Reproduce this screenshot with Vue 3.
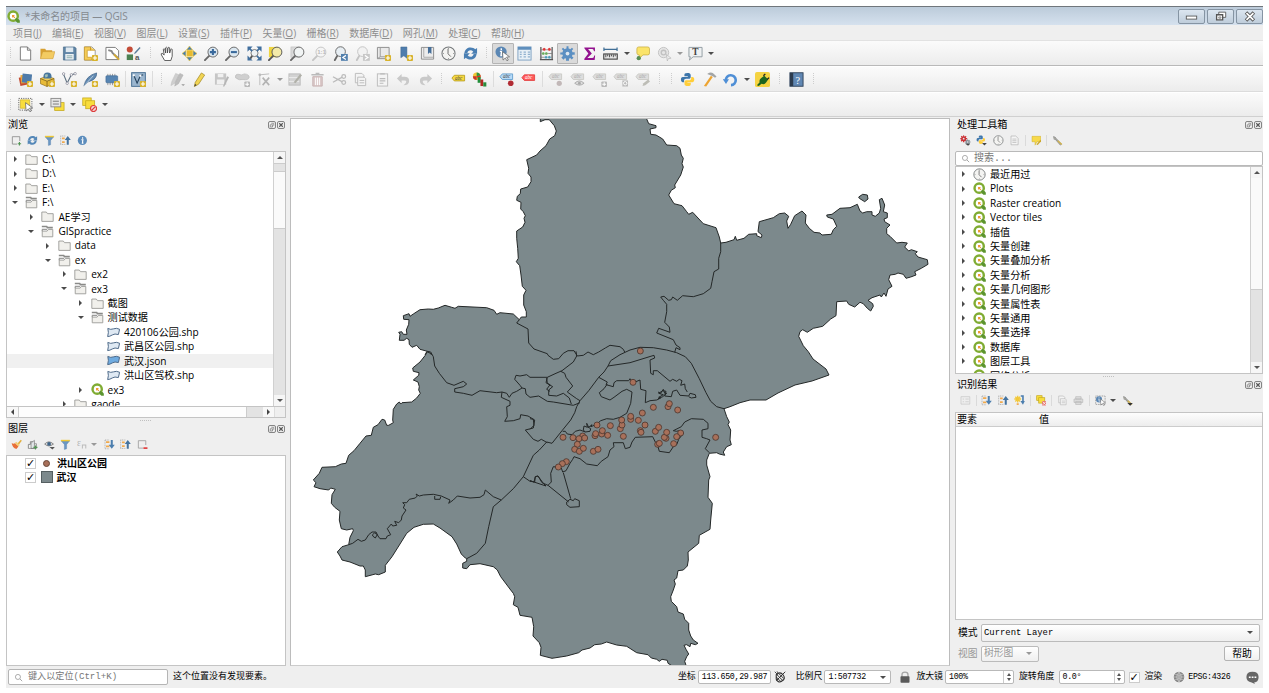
<script setup>
/* ---------- icon artwork, 16 x 16 grid ---------- */
const plus = '<rect x="9.500" y="9.500" width="6.500" height="6.500" rx="1" fill="#d8b32c"/><path d="M12.750 10.500v4.500M10.500 12.750h4.500" stroke="#fff" stroke-width="1.200"/>'
const gplus = '<rect x="10" y="10" width="6" height="6" rx="1" fill="#b9b9b9"/><path d="M13 11v4M11 13h4" stroke="#fff" stroke-width="1.1"/>'
const lens = (f, s, extra = '') => `<path d="M5.500 10.500L1 15" stroke="${s}" stroke-width="2" stroke-linecap="round"/><circle cx="9.500" cy="6.500" r="5.300" fill="${f}" stroke="${s}" stroke-width="1"/>${extra}`
const glass = (f, s, extra = '') => `<path d="M4.500 10.500L2 15" stroke="${s}" stroke-width="2" stroke-linecap="round"/><circle cx="8" cy="6" r="5.200" fill="${f}" stroke="${s}"/>${extra}`
const tag = (f, s, x = 0, y = 0, t = '#444') => `<g transform="translate(${x} ${y})"><path d="M1 6.500L3.500 3.500H14.500V9.500H3.500Z" fill="${f}" stroke="${s}" stroke-width=".9"/><text x="4.200" y="8.400" font-size="5.400" font-style="italic" font-family="Liberation Serif" fill="${t}">abc</text></g>`
const pyth = '<path d="M8 1c-3 0-3.300 1-3.300 2.200v1.300h3.600v.7H3C1.500 5.200 1 6.500 1 8s.6 2.800 2 2.800h1.300V9.200c0-1.200 1-2 2.100-2h3.300c1 0 1.700-.8 1.700-1.700V3.200C11.400 1.700 10 1 8 1z" fill="#3d76ab"/><path d="M8.200 15c3 0 3.300-1 3.300-2.200v-1.300H7.900v-.7h5.300c1.500 0 2-1.300 2-2.800s-.6-2.800-2-2.800h-1.300v1.600c0 1.200-1 2-2.100 2H6.500c-1 0-1.700.8-1.700 1.700v2.300C4.800 14.300 6.200 15 8.200 15z" fill="#ffce3a"/>'
const arrowDown = '<path d="M1.500 1.500v13M1.500 1.500h6M1.500 14.500h6" stroke="#9a9a9a" stroke-dasharray="1.500 1"/><path d="M3 4.500h5M3 11h5" stroke="#f0a94c" stroke-width="2.600"/><path d="M10 1.500v7H7l4.500 6 4.500-6h-3v-7z" fill="#4c7eae"/>'
const arrowUp = '<path d="M.5 1.500h8M.5 14h8M1 2v12" stroke="#9a9a9a" stroke-dasharray="1.500 1"/><path d="M3 5h4M3 10.500h4" stroke="#f0a94c" stroke-width="2.600"/><path d="M10 14.500v-7H7l4.500-6 4.500 6h-3v7z" fill="#44739f"/>'
const filter = '<path d="M1.500 2.500h13L9.800 8v6.500l-3.300 1V8z" fill="#6a97c4" stroke="#5580aa" stroke-width=".6"/><path d="M1.500 2.300h13" stroke="#f0c835" stroke-width="2.200"/>'
const refresh = (c) => `<path d="M1.500 7.500C2 3.500 4.800 1.500 8 1.500c2.300 0 3.900.8 5 2L15 2v6.300H8.700L11 6C10 5 9 4.500 8 4.500 6.300 4.500 5 5.500 4.700 7.500z" fill="${c}"/><path d="M14.500 8.500c-.5 4-3.300 6-6.500 6-2.300 0-3.900-.8-5-2L1 14V7.700h6.300L5 10c1 1 2 1.500 3 1.500 1.700 0 3-1 3.300-3z" fill="${c}"/>`
const clock = '<circle cx="8" cy="8" r="7" fill="#f4f4f2" stroke="#75797b" stroke-width="1.100"/><path d="M7.500 3v5.300l3 3" stroke="#666" fill="none"/><path d="M8 2v1M14 8h-1M2 8h1M8 14v-1" stroke="#888"/>'
const info = '<circle cx="8" cy="8" r="6.800" fill="#5b8cbc"/><path d="M8.300 3.500v2M6.500 7H8.700L8 12H9.500" stroke="#fff" stroke-width="1.700" fill="none"/>'
const cursor = '<path d="M8 6l7.500 5.500-3.200.4 1.900 3-1.500.9-1.700-3.100L8.600 15z" fill="#fff" stroke="#666" stroke-width=".8"/>'
const note = '<path d="M2 3q0-2 2-2h9.500q2 0 2 2v4.500q0 2-2 2H8.500L4.500 13.500V9.500Q2 9.500 2 7.500z" fill="#fbe46a" stroke="#c8ae43" stroke-width=".8"/>'
const wrench = '<path d="M1.500 2.500l3 .5 1.500 2 8 8.500-1.700 1.500L5 6.500 2.500 6" fill="#b0b0a8" stroke="#777" stroke-width=".9"/><path d="M8.500 8.500l6 5.500" stroke="#d4b44a" stroke-width="2"/>'
const page = (s) => `<path d="M2.500 1h7.500l3.500 3.500v10.500h-11zM10 1v3.500h3.500" fill="#fff" stroke="${s}"/>`
const qlogo = '<path d="M9 9.500h3.500l3.300 3.500v2.800h-3L9 12z" fill="#5c9430"/><circle cx="7.600" cy="7.600" r="5.700" fill="#fff" stroke="#80ac33" stroke-width="3"/><path d="M10.500 10.500l3 3" stroke="#5c9430" stroke-width="3"/><path d="M6.200 6.200h3.400l-1 1.400 1.600 1.600-1 1-1.600-1.600-1.400 1z" fill="#ef9832"/>'
const globe = '<circle cx="8" cy="8" r="7" fill="#858585"/><path d="M1.500 8h13M8 1.500v13M3 4.500q5 2.500 10 0M3 11.500q5-2.500 10 0M8 1.500q-6 6.500 0 13M8 1.500q6 6.500 0 13" stroke="#e5e5e5" stroke-width=".7" fill="none"/>'
const abacus = '<path d="M2 1v14M14 1v14M1 14.500h14" stroke="#555" stroke-width="1.300"/><path d="M2 4h12M2 8h12M2 12h12" stroke="#777" stroke-width=".8"/><g stroke="#fff" stroke-width=".3"><circle cx="5.500" cy="3.500" r="1.700" fill="#d33"/><circle cx="11" cy="3.500" r="1.700" fill="#d33"/><circle cx="4.500" cy="8" r="1.700" fill="#6aac5d"/><circle cx="7.800" cy="8" r="1.700" fill="#6aac5d"/><circle cx="7.500" cy="12" r="1.600" fill="#4b9bb8"/><circle cx="11" cy="12" r="1.600" fill="#4b9bb8"/></g>'
const gear = (c) => `<g fill="${c}"><path d="M7 .3h2l.6 15.400H6.400zM.3 7l15.400-.4v2.800L.3 9z"/><path d="M7 .3h2l.6 15.400H6.400zM.3 7l15.400-.4v2.800L.3 9z" transform="rotate(45 8 8)"/><circle cx="8" cy="8" r="5.500"/></g><circle cx="8" cy="8" r="2" fill="#dfe7ef"/>`

const icons = {
  new: page('#777'),
  open: '<path d="M.5 13.500V3h5l1 1.500H13V7" fill="#d7a032"/><path d="M.5 13.500L2.800 6H15.800l-2 7.500z" fill="#f3cb62" stroke="#cf9c34" stroke-width=".6"/>',
  save: '<path d="M1.500 1h12l1.500 1.500V15H1.500z" fill="#5f84a5" stroke="#466a8a" stroke-width=".7"/><rect x="4" y="1.500" width="8" height="5" fill="#dfe8ef"/><rect x="3.500" y="8.500" width="9" height="6" fill="#edf1f4"/><path d="M5 10.500h6M5 12.500h6" stroke="#8aa"/>',
  layout: '<path d="M1.500 1h8l3.500 3.500V15H1.500z" fill="#fff" stroke="#999"/><path d="M1.500 1v14H9v-3H4.500V4.500H8V1zM8 1v3.500h5" fill="#f5cc58" stroke="#c89928" stroke-width=".8"/>' + plus,
  manager: '<path d="M1 1.500h10L14.500 5v9.500H1z" fill="#fff" stroke="#777"/><path d="M3.500 4.500l3.500 1 1 2 5.500 5" stroke="#888" stroke-width="2" fill="none"/><path d="M9.500 9l5.500 5.500" stroke="#d4aa34" stroke-width="2"/>',
  style: '<circle cx="4" cy="3.800" r="3.200" fill="#c34c37"/><rect x=".8" y="9" width="6.700" height="6" fill="#4c8152"/><path d="M14.500 1L9.500 6.500l-1 2 2-.8L15.500 2z" fill="#5b7c99"/><text x="9.500" y="15" font-size="8.500" font-weight="700" font-family="Liberation Sans" fill="#555">a</text>',
  hand: '<path d="M5 15.500L1.500 9.500q-.6-1.700.8-1.700L4.500 9.500 3.500 3.500q.8-1.300 1.600 0l1 4-.2-5.500q.9-1.500 1.700 0l.4 5.300.6-5.500q1-1.200 1.700.2L10.300 7.500l1.200-4q1.200-1 1.500.4L13 11l-1.500 4.500z" fill="#fff" stroke="#444" stroke-width=".9"/>',
  panmap: '<rect x="5" y="4.500" width="6.500" height="6.500" fill="#e7bb2e"/><g fill="#4b7fb0" stroke="#f2c93b" stroke-width=".7"><path d="M8 0l3.300 4.200H4.700z"/><path d="M8 16l3.300-4.200H4.700z"/><path d="M0 8l4.200-3.300v6.600z"/><path d="M16 8l-4.200-3.300v6.600z"/></g>',
  zoomin: lens('#dbe7f0', '#666', '<path d="M9.500 3.300v6.400M6.300 6.500h6.400" stroke="#39699c" stroke-width="2.200"/>'),
  zoomout: lens('#dbe7f0', '#666', '<path d="M6.300 6.500h6.400" stroke="#39699c" stroke-width="2.200"/>'),
  zoomfull: '<circle cx="8" cy="7.500" r="3.800" fill="#eef2f5" stroke="#777"/><path d="M5.500 10.500L3 14.500" stroke="#555" stroke-width="2"/><g fill="#416f9e"><path d="M.5.500h5.500L.5 6z"/><path d="M15.500.500H10L15.500 6z"/><path d="M.5 15.500H6L.5 10z"/><path d="M15.500 15.500H10L15.500 10z"/></g><path d="M2 2l3.500 3.500M14 2l-3.500 3.500M14 14l-3.500-3.500" stroke="#416f9e" stroke-width="1.800"/>',
  zoomsel: '<rect x="1" y="1" width="9" height="11" fill="#efd540"/>' + lens('#f3eaa9', '#555'),
  zoomlay: '<rect x="1" y="1" width="9" height="11" fill="#d9d9d9" stroke="#bbb" stroke-width=".6"/>' + lens('#f1f4f4', '#666'),
  zoomnat: lens('#f5f5f5', '#c4c4c4', '<text x="5.500" y="9" font-size="6.500" font-weight="700" font-family="Liberation Sans" fill="#bbb">1:1</text>'),
  zoomlast: glass('#e7eef3', '#666', '<rect x="8.500" y="8.500" width="7.300" height="7.300" fill="#507fad"/><path d="M13.800 10L10.500 12.200l3.300 2.200" stroke="#fff" stroke-width="1.300" fill="none"/>'),
  zoomnext: glass('#f2f2f2', '#c3c3c3', '<rect x="8.500" y="8.500" width="7.300" height="7.300" fill="#c7c7c7"/><path d="M10.500 10l3.300 2.200-3.300 2.200" stroke="#fff" stroke-width="1.300" fill="none"/>'),
  newmap: '<path d="M1.500 1.500h12.500v12H1.500z" fill="#e9e9e9" stroke="#8c8c8c"/><path d="M4.500 2v9.500M4.500 11.500H12M1.500 13.500l3-2" stroke="#999" fill="none"/>' + plus,
  new3d: '<path d="M3 1h6.500v12L6.200 10.500 3 12.500z" fill="#4e7dad" stroke="#3d658c" stroke-width=".5"/>' + plus,
  bookmarks: '<path d="M1.500 1.500H14.500v12.500H1.500z" fill="#ececec" stroke="#8c8c8c"/><path d="M4 2v10M4 12h10" stroke="#aaa"/><path d="M8.500 1h3.700v7.500L10.300 6.800 8.500 8.500z" fill="#466f99"/>',
  clock, refresh: refresh('#4a7fb3'), refreshs: refresh('#5588b8'),
  identify: '<circle cx="6.500" cy="6.500" r="6" fill="#5b87b4"/><path d="M6.700 2.500v1.800M5.200 5.700h1.800l-.6 4.500h1.300" stroke="#fff" stroke-width="1.500" fill="none"/>' + cursor,
  table: '<rect x="1" y="1" width="14" height="14" fill="#e8f0f6" stroke="#7da0c2"/><path d="M1 2.500h14" stroke="#5f8fbd" stroke-width="3"/><path d="M3 6.500h2M3 9h2M3 11.500h2M7 6.500h2.500M7 9h2.500M7 11.500h2.500M11.500 6.500H14M11.500 9H14M11.500 11.500H14" stroke="#8fb0ce" stroke-width="1.300"/>',
  abacus, gear: gear('#5b8fc2'),
  sigma: '<path d="M2.500 1.500h11.300V5.500h-1Q12.300 3.300 11 3.300H6.500L10.500 8l-4.800 4.700H11q1.800 0 2-2.700h1l-.5 5H2.500v-1.500L6.800 8 2.500 2.500z" fill="#93128f"/>',
  ruler: '<path d="M.8 3.500h14.500M1 1.700v3.500M15 1.700v3.500" stroke="#3f6e96" stroke-width="1.300"/><rect x=".8" y="8.500" width="14.400" height="5.500" fill="#e8e8e8" stroke="#444" stroke-width="1.200"/><path d="M3 9v3M5 9v2M7 9v3M9 9v2M11 9v3M13 9v2" stroke="#333" stroke-width=".9"/>',
  tip: note + '<circle cx="4" cy="13" r="2.300" fill="#588d54"/>',
  run: '<circle cx="7" cy="7" r="5.500" fill="#e5e5e5" stroke="#c1c1c1"/><circle cx="7" cy="7" r="2.500" fill="none" stroke="#c1c1c1" stroke-width="1.400"/><path d="M10 9l5 4-3 .5L11 16z" fill="#eee" stroke="#bbb" stroke-width=".8"/>',
  text: '<path d="M1 1.500h14v10H5.500L1.500 15l1-3.500H1z" fill="#eff1f2" stroke="#909ba1"/><text x="4.500" y="10" font-size="10" font-weight="700" font-family="Liberation Serif" fill="#444">T</text>',
  dsm: '<rect x="1.500" y="5" width="9" height="9" fill="#c34b31" transform="rotate(-12 6 9)"/><rect x="3" y="3" width="9" height="9" fill="#e9a73a" transform="rotate(-6 7 8)"/><path d="M5 1.500l10 1.200-1 9.500L4 11z" fill="#4e7ba9"/>' + plus,
  gpkg: '<path d="M.5 7l7-2.500L15 7v5l-7.500 3.500-7-3z" fill="#e7ba37" stroke="#8c6b17" stroke-width=".7"/><circle cx="8" cy="4.800" r="4.300" fill="#46759e"/><path d="M5 3l3-1 .5 2.500L6 6z" fill="#a3c1b7"/><path d="M.5 7l7 2.800L15 7M7.500 9.800v5.700" stroke="#765b16" stroke-width=".8" fill="#f2cf5c"/>' + plus,
  shp: '<path d="M1.500 2L5.500 12 10 3 14 1.800" stroke="#5e7180" stroke-width="1.200" fill="none"/><g fill="#fff" stroke="#778" stroke-width=".7"><circle cx="1.700" cy="2" r="1.300"/><circle cx="10" cy="3" r="1.300"/><circle cx="14" cy="1.800" r="1.300"/><circle cx="5.500" cy="12" r="1.300"/></g>' + plus,
  spatial: '<path d="M1 15Q3 4 14.500 1 15 8 5.500 10.500z" fill="#618ab2" stroke="#3e6288" stroke-width=".8"/><path d="M1 15L11 4" stroke="#e4edf3" stroke-width=".7"/>' + plus,
  memory: '<path d="M3 2v12M5.500 2v12M8 2v12M10.500 2v12" stroke="#999" stroke-width="1"/><rect x="1" y="4" width="12.500" height="7.500" rx="1" fill="#5684b2" stroke="#426b96" stroke-width=".7"/>' + plus,
  virtual: '<rect x=".7" y=".7" width="14.600" height="14.600" fill="#9bb6cf" stroke="#456d91"/><path d="M3 3.500l3.500 8.500L10 4 13 3" stroke="#23405a" stroke-width="1.100" fill="none"/><circle cx="3" cy="3.500" r="1.200" fill="#fff"/><circle cx="10" cy="4" r="1.200" fill="#fff"/>' + plus,
  edits: '<path d="M1 14.500L2 10 6 1.500l3.500 1.500L5 12z" fill="#cfcfcf" stroke="#bbb" stroke-width=".5"/><path d="M5 15l1-4.500L10.500 1.500l3.500 1.700L9 12.500z" fill="#bdbdbd" stroke="#aaa" stroke-width=".5"/><path d="M12 13h4l-2 2z" fill="#999"/>',
  pencil: '<path d="M2.500 15.500L3.500 11 10 1l3.500 2.200L7 13z" fill="#f2d553" stroke="#a58c2c" stroke-width=".8"/><path d="M2.500 15.500l.7-2.700 1.600 1.100z" fill="#333"/>',
  saveed: '<path d="M1 1.500h12v12H1z" fill="#c6c6c6"/><path d="M4 2h6v3.500H4zM3 8h8v5H3z" fill="#f0f0f0"/><path d="M9.500 15.500l4.500-11 2 1-5 10z" fill="#b5b5b5"/>',
  addpoly: '<path d="M.5 6Q0 2 4 2.500q3 1.500 6-.5 5.500 .5 5 4-1 3-6.500 2-4 1.500-8-2z" fill="#cfcfcf" stroke="#b8b8b8" stroke-width=".7"/>' + gplus,
  vertex: '<path d="M3 2v12M3 3l10-1" stroke="#bbb"/><path d="M6 6l7 8M13 6l-7 8" stroke="#b3b3b3" stroke-width="1.700"/><circle cx="3" cy="3" r="1.500" fill="#bbb"/>',
  modify: '<rect x="1" y="2" width="12" height="12" fill="#d2d2d2" stroke="#bdbdbd"/><path d="M1 6h11M1 10h11" stroke="#eee"/><path d="M6 11L13 2l2 1.500L8 12z" fill="#b0b0a8"/>',
  trash: '<path d="M1.500 3h13M6 1.500h4" stroke="#bbb" stroke-width="1.500"/><path d="M3 5h10v10H3z" fill="#dbcaca" stroke="#c6b0b0"/><path d="M6 6v8M8 6v8M10 6v8" stroke="#fff"/>',
  cut: '<path d="M1 5l10 5.500M1 11l10-5.500" stroke="#bbb" stroke-width="1.300"/><circle cx="12.500" cy="4.800" r="2" fill="none" stroke="#bbb" stroke-width="1.300"/><circle cx="12.500" cy="11.200" r="2" fill="none" stroke="#bbb" stroke-width="1.300"/>',
  copy: '<path d="M2.500 1.500h7l2 2v8h-9z" fill="#f4f4f4" stroke="#bbb"/><path d="M5 5.500h7l1.500 1.500v7.500H5zM7 9h5M7 11.500h5" fill="#f4f4f4" stroke="#bbb"/>',
  paste: '<rect x="2.500" y="2" width="11" height="13" fill="#f4f4f4" stroke="#bbb"/><path d="M5.500 2h5M5 7h6M5 9.500h6M5 12h4" stroke="#bbb" stroke-width="1.300"/>',
  undo: '<path d="M6 2v3h3q5 0 5 4.500T8 14q3-2 3-3.500T9 9H6v3L1 7z" fill="#c9c9c9"/>',
  redo: '<path d="M10 2v3H7Q2 5 2 9.500T8 14q-3-2-3-3.500T7 9h3v3l5-5z" fill="#c9c9c9"/>',
  abc: tag('#f6d841', '#b79c1f', 0, 0),
  diagram: '<circle cx="5" cy="4.500" r="4" fill="#f2c536"/><path d="M5 4.500L9 3a4 4 0 0 1-2 5z" fill="#d33425"/><path d="M5 4.500V.5a4 4 0 0 1 3.800 3z" fill="#2c9444"/><path d="M5 4.500v4a4 4 0 0 1-4-4z" fill="#c8352b"/><rect x="6" y="5.500" width="3.300" height="6" fill="#1f8d39"/><rect x="9" y="8" width="3" height="7" fill="#b02a22"/><rect x="12" y="11" width="3.300" height="4.500" fill="#288b3b"/>',
  pinabc: tag('#b6d9f6', '#5e9acb', 0, -1.500) + '<circle cx="12.500" cy="12" r="3" fill="#b12b33"/>',
  redabc: tag('#ff5959', '#e23f3f', 0, -.5, '#fff'),
  g1: tag('#ddd', '#c7c7c2', 0, -1.500, '#aaa') + '<circle cx="12" cy="12" r="2.800" fill="#c2b8b8"/>',
  g2: tag('#ddd', '#c7c7c2', 0, -1.500, '#aaa') + '<path d="M5 12q5-5 10 0-5 4-10 0z" fill="#ddd" stroke="#aaa"/><circle cx="10" cy="12" r="1.500" fill="#aaa"/>',
  g3: tag('#ddd', '#c7c7c2', 0, -1.500, '#aaa') + gplus,
  g4: tag('#ddd', '#c7c7c2', 0, -1.500, '#aaa') + '<rect x="10" y="9" width="6" height="6.500" fill="#bbb"/><circle cx="13" cy="12" r="1.800" fill="none" stroke="#fff"/>',
  g5: tag('#ddd', '#c7c7c2', 0, -1.500, '#aaa') + '<path d="M8 15l1-3 5-4 2 2-5 4z" fill="#bdbdb6"/>',
  python: pyth,
  hammer: '<path d="M2 15L9.500 4l2 1.200L4.500 15.500z" fill="#eda431"/><path d="M5.500 2q5-3 7.500.5l2.500 2.200-1.600 1.300L11.500 4.500 9 3.500z" fill="#a3a5a6"/>',
  undo2: '<path d="M3 9A5.300 5.300 0 1 1 8.500 14" fill="none" stroke="#4f8fd6" stroke-width="2.800"/><path d="M-.2 7.700h6.600L3.200 12.800z" fill="#4f8fd6"/>',
  plugin: '<rect x="0" y="0" width="16" height="16" rx="2" fill="#f5d342"/><path d="M2 14l3-3q-1-3 2-5l3-2 4 4-2 3q-2 3-5 1.500L4 15z" fill="#1d651f"/><path d="M9 4l2-2M13 8l2-2" stroke="#222" stroke-width="1.500"/>',
  help: '<rect x="1" y=".8" width="14" height="14.400" fill="#6087b3" stroke="#31445a"/><rect x="1" y="1" width="3.500" height="14" fill="#2c3b4e"/><text x="6.800" y="12.300" font-size="11" font-family="Liberation Serif" fill="#fff">?</text>',
  select: '<rect x=".8" y="1.500" width="14" height="12.500" fill="none" stroke="#555" stroke-width=".9" stroke-dasharray="1.200 1.200"/><path d="M2.500 3h10v9h-10z" fill="#f8dd3d" stroke="#c9ad22" stroke-width=".7"/>' + cursor,
  selform: '<rect x="5" y="6" width="10" height="8.500" fill="#f8dd3d" stroke="#c3a81e" stroke-width=".8"/><rect x="1" y="1.500" width="10.500" height="9" fill="#e7e7e7" stroke="#8b8b8b"/><path d="M3 4.500h6.500M3 7.500h6.500" stroke="#777"/>',
  desel: '<rect x=".8" y="1" width="9" height="8" fill="#f8dd3d" stroke="#c3a81e" stroke-width=".8"/><rect x="4" y="4" width="9.500" height="8.500" fill="#f8dd3d" stroke="#c3a81e" stroke-width=".8"/><circle cx="12.300" cy="12.300" r="3.200" fill="#f6dada" stroke="#dc3b3b" stroke-width="1.200"/><path d="M10.500 14l3.500-3.500" stroke="#dc3b3b" stroke-width="1.400"/>',
  addlayer: '<path d="M13 9V2.500H2v11h7" fill="none" stroke="#888" stroke-width="1.200"/><path d="M12.500 10.500v5M10 13h5" stroke="#529555" stroke-width="1.700"/>',
  filter, arrowUp, arrowDown, info,
  brush: '<path d="M14.500 1L8 8.500l2 2L16 2.500z" fill="#e1ad39"/><path d="M1 6q3 2 5 0l5 5-3 4Q2 13 1 6z" fill="#e86f39"/><path d="M5.500 6L8 4l5 5-2 2z" fill="#f3cf7a"/>',
  group: '<path d="M2 14V8h3V4h4v4" fill="none" stroke="#777" stroke-width="1.200"/><path d="M6 14V6l5-4v12z" fill="#e2e6e8" stroke="#777"/><path d="M2 14h12V7h-3" fill="none" stroke="#777"/><path d="M12.500 9.500v6M9.500 12.500h6" stroke="#529555" stroke-width="1.700"/>',
  eye: '<path d="M1 7.500Q7 1 14 7.500 7 13 1 7.500z" fill="#ddd" stroke="#666" stroke-width="1.100"/><circle cx="7.500" cy="7.300" r="2.800" fill="#3f6488"/><path d="M8 12h8l-3.500 3.500z" fill="#555"/>',
  expr: '<text x="0" y="11" font-size="14" font-family="Liberation Serif" fill="#b5b5b5">ε</text><path d="M8 14V9h5v5" fill="none" stroke="#bbb" stroke-width="1.500"/>',
  remove: '<path d="M13 9V2.500H2v11h7" fill="none" stroke="#999" stroke-width="1.200"/><path d="M9.500 13.500h6" stroke="#e03c3c" stroke-width="2.500"/>',
  gears: '<g transform="scale(.68)">' + gear('#cb2f33') + '</g><g transform="translate(7 6) scale(.55)">' + gear('#8a9299') + '</g><path d="M8 13h7l-3 3z" fill="#444"/>',
  pymenu: '<g transform="scale(.88)">' + pyth + '</g><path d="M9 12h7l-3.500 3.500z" fill="#444"/>',
  doc: '<path d="M3 1.500h7l3.500 3.500v9.500H3zM5 6h6M5 8.500h6M5 11h6" fill="#f5f5f5" stroke="#b0b0b0"/>',
  inplace: '<path d="M1.500 2h13v8H9l-3 5V10H1.500z" fill="#f7d94a" stroke="#cbab29" stroke-width=".7"/><path d="M8 14l6-7 1.500 1.300L10 15z" fill="#cda82c"/>',
  wrench, qlogo, globe,
  wrenchm: wrench + '<path d="M8 12h8l-4 4z" fill="#333"/>',
  formv: '<path d="M1.500 2.500h13v11h-13zM4 6h2M8 6h5M4 10h2M8 10h5" fill="#eee" stroke="#c4c4c4"/>',
  newres: '<path d="M5.500 1v10M.5 6h10M2 2.500l7 7M9 2.500l-7 7" stroke="#f2c838" stroke-width="2"/><path d="M4 13.500h3" stroke="#f0a94c" stroke-width="2.500"/><path d="M10 1.500h3.300v8" fill="none" stroke="#4c7eae" stroke-width="2.400"/><path d="M9.500 9l3.800 5.500L16 9z" fill="#4c7eae"/>',
  clearsel: '<rect x="1" y="1" width="8" height="7" fill="#f8dd3d" stroke="#c3a81e"/><rect x="4" y="4" width="9" height="8" fill="#f8dd3d" stroke="#c3a81e"/><path d="M9 9h6.500v6.500H9z" fill="#e57772"/><path d="M10 10l4.500 4.500M14.500 10L10 14.500" stroke="#fff" stroke-width="1.100"/>',
  print: '<path d="M4 2.500h8V6H4zM1.500 6h13v5h-13zM4 9.500h8v4.500H4z" fill="#ddd" stroke="#b8b8b8"/>',
  idmode: '<rect x="1" y="1.500" width="14" height="12.500" fill="none" stroke="#666" stroke-dasharray="1.200 1.200"/><circle cx="6" cy="6.500" r="4.500" fill="#5b87b4"/><path d="M6 3.500v1.500M5 6.300h1.300l-.4 3H7" stroke="#fff" fill="none"/>' + cursor,
  folder: '<path d="M1 2.500h5.500l1.500 2h7v9.500H1z" fill="#f1f0ec" stroke="#9a9a97" stroke-width="1.100"/>',
  folderopen: '<path d="M1 1.800h6l1 1.500h6.500" fill="none" stroke="#8a8a88" stroke-width="2"/><path d="M1.500 6v8.500h13V5.500H9L7.500 7.500h-6z" fill="#f1f0ec" stroke="#9a9a97" stroke-width="1.100"/><path d="M1 5.300h6.500" fill="none" stroke="#8a8a88" stroke-width="1.300"/>',
  mouse: '<path d="M3 5q5-5 9 0t-1 8q-5 4-8-2z" fill="#eee" stroke="#333" stroke-width="1.500"/><path d="M4 5l8 8M6 3l7 7M3 8l6 6M15 1L3 13" stroke="#333" stroke-width="1.300"/><path d="M1 1l4 4M4 .5l2 3" stroke="#444" stroke-width="1.300"/>',
  lock: '<path d="M4 8V5q0-3.500 4-3.500T12 5v3" fill="none" stroke="#a5a5a5" stroke-width="1.800"/><rect x="2" y="7" width="12" height="8.500" rx="1" fill="#5a5a5a"/>',
  chat: '<path d="M.5 7.500Q.5 1 8 1t7.500 6.500T10 14l1 2-4-2Q.5 13.500.5 7.500z" fill="#666"/><path d="M3.500 7.700h2.200M7 7.700h2.200M10.500 7.700h2.200" stroke="#fff" stroke-width="1.900"/>',
  search: '<circle cx="7" cy="7" r="4.500" fill="none" stroke="#888" stroke-width="1.200"/><path d="M10.500 10.500l4 4" stroke="#888" stroke-width="1.300"/>',
  float: '<rect x="1" y="1" width="14" height="14" rx="3" fill="none" stroke="#777" stroke-width="1.800"/><path d="M6.500 4.500h5v5M4.500 7.500h4.500v4.500H4.500z" fill="none" stroke="#777" stroke-width="1.400"/>',
  close: '<rect x="1" y="1" width="14" height="14" rx="3" fill="none" stroke="#777" stroke-width="1.800"/><path d="M4.500 4.500l7 7M11.500 4.500l-7 7" stroke="#555" stroke-width="2.200"/>'
}

/* ---------- toolbars: icon name, "|" separator, ":" grip, "v" drop arrow, "x" disabled drop arrow ---------- */
const bars = [
  [[':', 9.2], 'new', 'open', 'save', 'layout', 'manager', 'style', [':', 12.4], 'hand', 'panmap', 'zoomin', 'zoomout', 'zoomfull', 'zoomsel', 'zoomlay', 'zoomnat', 'zoomlast', 'zoomnext', 'newmap', 'new3d', 'bookmarks', 'clock', 'refresh', [':', 11], '!identify', 'table', 'abacus', '!gear', 'sigma', 'ruler', 'v', 'tip', 'run', 'x', 'text', 'v'],
  [[':', 9.2], 'dsm', 'gpkg', 'shp', 'spatial', 'memory', ['|', 5], 'virtual', ['|', 6], [':', 11.4], 'edits', 'pencil', 'saveed', 'addpoly', 'vertex', 'x', 'modify', 'trash', 'cut', 'copy', 'paste', 'undo', 'redo', [':', 11], 'abc', 'diagram', ['|', 5.4], 'pinabc', 'redabc', ['|', 6], 'g1', 'g2', 'g3', 'g4', 'g5', [':', 12], [':', 12], 'python', 'hammer', 'undo2', 'v', 'plugin', [':', 12], 'help', [':', 14]],
  [[':', 9.2], 'select', 'v', 'selform', 'v', 'desel', 'v']
].map(bar => bar.map(e => {
  if (Array.isArray(e)) return { kind: e[0] === ':' ? 'grip' : 'sep', w: e[1] }
  if (e === 'v' || e === 'x') return { kind: 'drop', off: e === 'x' }
  return { kind: 'icon', on: e[0] === '!', svg: icons[e.replace('!', '')] }
}))

const menus = [['项目', 'J'], ['编辑', 'E'], ['视图', 'V'], ['图层', 'L'], ['设置', 'S'], ['插件', 'P'], ['矢量', 'O'], ['栅格', 'R'], ['数据库', 'D'], ['网孔', 'M'], ['处理', 'C'], ['帮助', 'H']]

const tree = [
  [0, '>', 'folder', 'C:\\'], [0, '>', 'folder', 'D:\\'], [0, '>', 'folder', 'E:\\'], [0, 'v', 'folderopen', 'F:\\'],
  [1, '>', 'folder', 'AE学习'], [1, 'v', 'folderopen', 'GISpractice'], [2, '>', 'folder', 'data'], [2, 'v', 'folderopen', 'ex'],
  [3, '>', 'folder', 'ex2'], [3, 'v', 'folderopen', 'ex3'], [4, '>', 'folder', '截图'], [4, 'v', 'folderopen', '测试数据'],
  [5, '', 'poly', '420106公园.shp'], [5, '', 'poly', '武昌区公园.shp'], [5, '', 'polyOn', '武汉.json'], [5, '', 'poly', '洪山区驾校.shp'],
  [4, '>', 'qlogo', 'ex3'], [3, '>', 'folder', 'gaode']
]
const polyShape = f => `<path d="M1 3Q4.500 5 8 3.500T15.500 4L14 10.500Q9.500 9 6.500 11T.8 13Q2.500 8 1 3z" fill="${f}" stroke="#4b6787" stroke-width="1.200"/>`
icons.poly = polyShape('#dfe9f3')
icons.polyOn = polyShape('#6fabe0')

const tools = ['最近用过', 'Plots', 'Raster creation', 'Vector tiles', '插值', '矢量创建', '矢量叠加分析', '矢量分析', '矢量几何图形', '矢量属性表', '矢量通用', '矢量选择', '数据库', '图层工具', '网络分析']

/* ---------- map geometry: survey sheets at 3 units per pixel ---------- */
const sheets = { n: [310, 115], e: [620, 115], w: [300, 340], c: [530, 330], s: [460, 480], z: [0, 0] }
function trace(...parts) {
  let d = ''
  for (let i = 0; i < parts.length; i += 2) {
    const [ox, oy] = sheets[parts[i]]
    const k = parts[i] === 'z' ? 1 : 3
    for (const p of parts[i + 1].trim().split(/\s+/)) {
      const [x, y] = p.split(',').map(Number)
      d += (d ? 'L' : 'M') + (ox + x / k).toFixed(1) + ' ' + (oy + y / k).toFixed(1)
    }
  }
  return d
}
const land = trace(
  'n', '691,0 691,20 705,14 718,14 726,24 733,32 739,48 734,62 719,72 708,92 690,108 680,120 650,134 656,160 654,175 663,186 663,200 653,216 632,222 631,236 622,244 620,256 633,262 632,282 640,290 646,302 642,310 645,322 638,336 620,348 620,370 623,400 625,430 619,440 629,452 633,480 637,514 648,526 641,540 641,570 649,590 649,606 634,606 628,614 610,597 570,593 560,598 552,586 530,578 445,574 435,580 425,577 405,571 385,579 370,583 355,582 330,584 310,597 300,604 297,596 280,602 281,613 297,614 296,628 289,645 291,658 280,658 275,650 266,652 270,658 268,676 282,676 290,670 297,674 298,688 306,697',
  'w', '350,16 360,28 382,34 376,46 360,66 338,84 340,94 357,98 356,106 340,120 354,126 358,140 356,150 361,160 350,174 335,186 306,188 302,192 298,186 290,192 280,208 278,240 280,248 266,256 260,256 254,240 246,238 234,254 220,262 214,286 198,288 180,310 162,332 146,346 138,370 124,372 106,380 66,382 58,400 40,420 48,428 42,440 60,446 86,450 92,444 106,448 96,464 94,490 104,502 120,514 118,540 124,566 140,570 158,566 160,572 150,592 146,614 126,620 112,636 120,648 126,660 150,666 180,678 190,678 196,690 196,710 226,702 236,704 256,696 256,676 276,650 300,612 320,580 342,562 370,553 400,552 420,564 456,590 470,612 484,642 496,654 500,656 500,664 488,670 488,684 500,686 510,674 540,671 580,680 592,690 602,710 632,750',
  's', '160,340 164,350 160,374 174,382 180,406 216,412 221,440 219,468 238,488 243,502 241,526 276,535 320,528 356,518 366,510 390,504 404,494 424,492 440,486 470,495 500,499 530,518 564,524 574,534 590,538 598,544 606,538 622,541 624,550 634,556 634,570 676,570 678,556 674,544 680,530 686,522 678,508 672,496 680,494 690,500 692,490 706,494 714,490 700,480 692,468 686,450 686,430 674,418 670,402 654,396 650,380 634,364 632,350 640,330 646,312 642,300 650,294 654,272 670,270 682,258 685,240 684,216 716,190 718,166 750,148 752,120 757,70 744,52 746,0',
  'c', '540,440 530,405 530,390 538,370 560,368 568,372 584,376 580,366 590,350 604,344 600,330 602,300 594,284 598,276 590,260 582,236 600,230 630,218 660,210',
  'z', '766,400 778,393 795,385 812,381 829,375 826,369 813,359',
  'e', '565,710 550,692 536,664 540,650 548,644 562,652 580,640 608,634 632,612 648,602 650,560 680,558 686,568 704,576 720,562 730,566 742,580 752,588 760,574 758,566 744,556 756,548 780,540 784,546 792,534 798,544 804,522 816,514 806,494 810,480 826,478 834,474 850,478 858,490 872,486 888,480 884,470 904,460 924,448 922,434 894,426 886,416 892,410 874,404 866,408 854,396 862,384 846,382 830,384 810,364 800,356 800,340 810,330 794,320 792,312 802,308 802,294 790,290 794,270 786,250 778,254 782,280 778,294 766,304 756,300 756,290 740,290 728,294 720,288 712,268 690,278 660,280 636,298 620,300 622,306 640,312 650,334 640,344 634,358 606,360 600,354 582,352 568,340 556,324 558,300 546,288 524,302 512,328 504,340 500,318 506,304 494,294 478,296 460,308 418,320 414,350 426,360 424,368 410,362 410,356 386,358 372,370 350,376 346,364 342,374 318,382 302,384 298,366 288,338 250,326 218,292 206,298 200,290 186,272 162,266 146,240 154,226 166,218 164,210 182,180 190,156 186,146 190,130 184,120 180,100 170,92 140,90 128,72 108,60 92,58 90,42 108,38 108,32 86,26 80,12 80,0'
) + 'Z'
const island = trace('e', '716,246 728,238 742,240 744,252 734,260 718,250') + 'Z'
const borders = [
  trace('e', '302,384 302,410 296,430 296,462 282,470 276,500 272,520 250,536 220,545 188,542 172,556 158,546 154,554 146,556 132,544 122,546 130,556 140,568 140,590 134,622 148,636 150,652 116,640 110,654 160,674 168,690 180,698 180,704 168,698 164,712'),
  trace('n', '628,614 620,624 654,642 656,684 672,702 712,716', 'c', '54,76 70,88 86,86 100,70 114,62 132,62 142,78 160,76 174,66 190,74 206,66 226,54 240,46 270,50 280,58 284,66'),
  trace('c', '582,236 560,230 542,214 528,188 508,146 484,100 466,80 440,68 410,60 370,53 330,52 300,60 270,74 242,92 234,108 222,126 206,142 176,182 150,212 140,230 134,248 122,270 96,302 66,340 50,336 28,360 10,376', 'w', '670,410 640,446 604,480 580,500 566,560 556,610 530,640 500,656'),
  trace('c', '138,64 140,78 130,96 96,122 78,130 52,142 0,142', 'w', '680,104 660,108 648,106 644,118 660,136 666,144 650,154 636,160 628,172 620,160 606,156 590,158 540,152 516,166 490,160 464,156 464,146 490,140 500,132 490,124 462,136 440,128 418,100 404,78 400,50 392,36 382,34'),
  trace('w', '606,156 604,172 630,184 630,196 620,200 622,230 614,244 640,242 660,236 662,224 684,228 704,240 700,264 676,270 700,298 714,304 724,298 742,308'),
  trace('w', '666,144 676,146 678,162 690,172 716,168 742,184', 'c', '70,216 130,226 150,218'),
  trace('c', '52,142 48,158 68,170 56,180 56,196 80,198 100,190 118,204 124,222'),
  trace('c', '92,124 104,130 108,142 128,168 112,186 140,206 150,212'),
  trace('c', '0,266 10,268 12,286 0,298'), trace('w', '740,114 742,130 750,134 740,148 750,154'),
  trace('w', '670,410 690,424 704,426 706,410 714,408 730,430 738,438', 'c', '0,452 12,456 16,440 24,438 36,458 54,466 64,456 62,430 70,410 86,412'),
  trace('c', '54,466 116,516'), trace('c', '100,428 122,506'),
  trace('c', '110,516 120,508 130,512 134,506 148,512 148,530 120,532 110,524') + 'Z',
  trace('c', '86,412 94,414 98,426 108,422 120,400 128,388 132,380 150,386 170,402 202,407 214,394 234,380 240,360 252,350 250,338 280,338 286,356 300,352 306,336 316,322 368,320 376,336 384,350 388,364 418,368 430,350 440,344 446,328 460,310 446,302 440,304 430,302 454,290 464,276 484,266 520,268 534,280 534,296 516,300 516,322 530,326 540,330 526,356 538,368'),
  trace('c', '206,142 232,156 228,164 250,170 252,158 260,152 296,152 300,146 310,158 330,150 332,178 348,182 346,218 360,212 380,210 392,204 386,202 400,194 386,190 398,182 408,184 404,198 424,200 428,184 440,180 450,196 476,198 480,190 496,194 498,202 484,204 476,200'),
  trace('c', '384,186 392,190 400,178 404,190 410,190 398,200 384,206'),
  trace('c', '232,162 222,176 208,188 214,200 240,210 252,202 276,184 290,178 306,186 302,220 290,250 270,262 250,268 230,266 212,272 198,284 182,290 186,284 176,292 170,280 172,292 162,288 160,300 166,306 150,300 136,304 126,314 112,312 106,304 98,304'),
  trace('c', '166,306 180,304 182,296 172,290'),
  trace('c', '234,108 300,98 372,76 374,84 360,90 362,130 370,134 370,122 382,122 420,154 428,148 440,154 448,148 456,152 452,166 464,162 466,176 472,186'),
  trace('w', '146,614 158,610 174,598 184,604 196,600 206,584 216,576 228,576 234,588 240,596 258,596 262,588 272,584 262,566 274,552 278,558 290,556 284,544 296,548 304,540 306,528 318,510 310,504 314,494 308,488 320,488 328,478 346,474 352,468 348,462 358,468 370,465 400,463 424,468 450,480 446,490 460,480 472,468 510,474 540,472 552,464 556,450 580,470 604,480'),
  trace('w', '404,468 404,478 420,478 422,470'), trace('w', '218,584 224,578 232,584 226,594 218,588') + 'Z',
  trace('n', '345,720 350,710 360,714 365,720')
]
const parks = '331,63 309,157 414,230 418,221 443,240 370,232 337,249 302,268 302,259 325,271 271,296 276,285 275,270 345,285 376,304 386,292 408,325 403,322 410,307 331,302 333,307 280,319 233,316 215,312 217,302 241,287 201,285 195,317 197,311 99,322 129,323 158,318 147,326 164,324 142,343 134,358 148,364 160,355 190,364 204,358 452,309 440,320 431,341 383,343 388,340 557,322 109,395 97,401 85,411'
  .split(' ').map(p => p.split(',').map(Number)).map(([x, y]) => [530 + x / 3, 330 + y / 3])
</script>

<template>
  <div class="window">
    <header class="title">
      <svg class="logo" viewBox="0 0 16 16" v-html="icons.qlogo"></svg>
      <span class="caption">*未命名的项目 — QGIS</span>
      <div class="winbtns">
        <i><svg viewBox="0 0 26 15"><rect x="7" y="7" width="12" height="3.500" fill="#fff" stroke="#555" /></svg></i>
        <i><svg viewBox="0 0 26 15"><path d="M11 2.500h8v6h-8z" fill="#fff" stroke="#555" /><path d="M8.500 5.500h7v6h-7z" fill="#fff" stroke="#555" stroke-width="1.500" /><path d="M11 8h2.500v1.500H11z" fill="none" stroke="#555" stroke-width=".7" /></svg></i>
        <i><svg viewBox="0 0 26 15"><path d="M9 3l9 9M18 3l-9 9" stroke="#555" stroke-width="4" /><path d="M9.500 3.500l8 8M17.500 3.500l-8 8" stroke="#fff" stroke-width="2" /></svg></i>
      </div>
    </header>

    <nav class="menu">
      <span v-for="m in menus" :key="m[1]">{{ m[0] }}(<u>{{ m[1] }}</u>)</span>
    </nav>

    <div v-for="(bar, i) in bars" :key="i" class="bar">
      <template v-for="(b, j) in bar" :key="j">
        <span v-if="b.kind === 'icon'" class="tool" :class="{ on: b.on }"><svg viewBox="0 0 16 16" v-html="b.svg"></svg></span>
        <span v-else-if="b.kind === 'drop'" class="drop" :class="{ off: b.off }"></span>
        <span v-else :class="b.kind" :style="{ width: b.w + 'px' }"></span>
      </template>
    </div>

    <main class="body">
      <aside class="left">
        <section class="dock browser">
          <div class="dockhead"><b>浏览</b><svg viewBox="0 0 16 16" v-html="icons.float"></svg><svg viewBox="0 0 16 16" v-html="icons.close"></svg></div>
          <div class="minibar">
            <svg v-for="n in ['addlayer', 'refreshs', 'filter', 'arrowUp', 'info']" :key="n" viewBox="0 0 16 16" v-html="icons[n]"></svg>
          </div>
          <div class="frame">
            <div class="rows">
              <div v-for="(r, i) in tree" :key="i" class="row" :class="{ hover: r[2] === 'polyOn' }" :style="{ paddingLeft: 3 + r[0] * 16.4 + 'px' }">
                <em :class="{ shut: r[1] === '>', open: r[1] === 'v' }"></em>
                <svg viewBox="0 0 16 16" v-html="icons[r[2]]"></svg>
                <span>{{ r[3] }}</span>
              </div>
            </div>
            <div class="vscroll"><i class="up"></i><div class="gap"></div><div class="thumb"></div><div class="track"></div><i class="down"></i></div>
          </div>
          <div class="hscroll"><i class="lt"></i><div class="thumb"></div><div class="track"></div><i class="rt"></i><div class="corner"></div></div>
        </section>
        <div class="split"></div>
        <section class="dock layers">
          <div class="dockhead"><b>图层</b><svg viewBox="0 0 16 16" v-html="icons.float"></svg><svg viewBox="0 0 16 16" v-html="icons.close"></svg></div>
          <div class="minibar">
            <svg v-for="n in ['brush', 'group', 'eye', 'filter', 'expr']" :key="n" viewBox="0 0 16 16" v-html="icons[n]"></svg>
            <span class="drop off tight"></span>
            <svg v-for="n in ['arrowDown', 'arrowUp', 'remove']" :key="n" viewBox="0 0 16 16" v-html="icons[n]"></svg>
          </div>
          <div class="layerlist">
            <div class="layer"><span class="check">✓</span><i class="dot"></i><b>洪山区公园</b></div>
            <div class="layer"><span class="check">✓</span><i class="sq"></i><b>武汉</b></div>
          </div>
        </section>
      </aside>

      <div class="canvas">
        <svg viewBox="291 119 658 546" width="658" height="546">
          <g stroke="#242828" stroke-width="1" stroke-linejoin="round" fill="none">
            <path :d="land" fill="#7c898c" />
            <path :d="island" fill="#7c898c" />
            <path v-for="(b, i) in borders" :key="i" :d="b" />
          </g>
          <circle v-for="(p, i) in parks" :key="i" :cx="p[0]" :cy="p[1]" r="3" fill="#a8705a" stroke="#4a352d" stroke-width=".8" />
        </svg>
      </div>

      <aside class="right">
        <section class="dock toolbox">
          <div class="dockhead"><b>处理工具箱</b><svg viewBox="0 0 16 16" v-html="icons.float"></svg><svg viewBox="0 0 16 16" v-html="icons.close"></svg></div>
          <div class="minibar">
            <svg v-for="n in ['gears', 'pymenu', 'clock', 'doc']" :key="n" viewBox="0 0 16 16" v-html="icons[n]"></svg>
            <span class="msep"></span><svg viewBox="0 0 16 16" v-html="icons.inplace"></svg><span class="msep"></span><svg viewBox="0 0 16 16" v-html="icons.wrench"></svg>
          </div>
          <div class="search"><svg viewBox="0 0 16 16" v-html="icons.search"></svg><span>搜索...</span></div>
          <div class="frame">
            <div class="rows">
              <div v-for="(t, i) in tools" :key="i" class="row">
                <em class="shut"></em>
                <svg viewBox="0 0 16 16" v-html="i ? icons.qlogo : icons.clock"></svg>
                <span>{{ t }}</span>
              </div>
            </div>
            <div class="vscroll"><i class="up"></i><div class="thumb"></div><div class="track"></div><i class="down"></i></div>
          </div>
        </section>
        <div class="split"></div>
        <section class="dock results">
          <div class="dockhead"><b>识别结果</b><svg viewBox="0 0 16 16" v-html="icons.float"></svg><svg viewBox="0 0 16 16" v-html="icons.close"></svg></div>
          <div class="minibar">
            <svg viewBox="0 0 16 16" v-html="icons.formv"></svg><span class="msep"></span>
            <svg v-for="n in ['arrowDown', 'arrowUp', 'newres']" :key="n" viewBox="0 0 16 16" v-html="icons[n]"></svg><span class="msep"></span>
            <svg viewBox="0 0 16 16" v-html="icons.clearsel"></svg><span class="msep"></span>
            <svg viewBox="0 0 16 16" v-html="icons.copy"></svg><svg viewBox="0 0 16 16" v-html="icons.print"></svg><span class="msep"></span>
            <svg viewBox="0 0 16 16" v-html="icons.idmode"></svg><span class="drop tight"></span><svg viewBox="0 0 16 16" v-html="icons.wrenchm"></svg>
          </div>
          <div class="grid">
            <div class="ghead"><span>要素</span><span>值</span></div>
          </div>
          <div class="form">
            <span class="lab">模式</span><div class="combo wide">Current Layer<span class="drop"></span></div>
          </div>
          <div class="form">
            <span class="lab dim">视图</span><div class="combo dim">树形图<span class="drop off"></span></div>
            <div class="btn">帮助</div>
          </div>
        </section>
      </aside>
    </main>

    <footer class="status">
      <div class="locator"><svg viewBox="0 0 16 16" v-html="icons.search"></svg><span>键入以定位(Ctrl+K)</span></div>
      <span class="msg">这个位置没有发现要素。</span>
      <span class="st">坐标</span><div class="box coord">113.650,29.987</div>
      <svg class="si mouse" viewBox="0 0 16 16" v-html="icons.mouse"></svg>
      <span class="st scale">比例尺</span><div class="box scalebox">1:507732<span class="drop"></span></div>
      <svg class="si lock" viewBox="0 0 16 16" v-html="icons.lock"></svg>
      <span class="st">放大镜</span><div class="box mag">100%<span class="spin"><i></i><i></i></span></div>
      <span class="st rot">旋转角度</span><div class="box ang">0.0°<span class="spin"><i></i><i></i></span></div>
      <span class="check">✓</span><span class="st render">渲染</span>
      <svg class="si" viewBox="0 0 16 16" v-html="icons.globe"></svg><span class="epsg">EPSG:4326</span>
      <svg class="si chat" viewBox="0 0 16 16" v-html="icons.chat"></svg>
    </footer>
  </div>
</template>

<style>
body { margin: 0; background: #fff; overflow: hidden; }
</style>

<style scoped>
.window { box-sizing: border-box; width: 1257px; height: 682px; margin: 6px 0 5px 6px; background: #efefef; display: flex; flex-direction: column; font: 10.1px/14px "Open Sans", "Noto Sans CJK SC", sans-serif; color: #000; }
.window * { box-sizing: border-box; }
svg { display: block; flex: none; }
i, em { font-style: normal; }

.title { height: 19px; flex: none; display: flex; align-items: center; border-top: 1px solid #70767c; background: linear-gradient(#bccbda, #d5e1ee); padding-left: 1px; }
.logo { width: 13px; height: 13px; }
.caption { margin-left: 5px; color: #858a90; font-size: 10px; letter-spacing: -.1px; white-space: nowrap; }
.winbtns { margin-left: auto; display: flex; gap: 2px; }
.winbtns i { width: 27px; height: 15px; border: 1px solid #8594a3; border-radius: 2px; background: linear-gradient(#dce6f0, #bfcddb); }
.winbtns svg { width: 25px; height: 13px; }

.menu { height: 15px; flex: none; display: flex; padding-left: 7px; color: #8d8d8d; font-size: 10px; line-height: 16px; gap: 10.5px; white-space: nowrap; }

.bar { height: 26px; flex: none; display: flex; align-items: center; background: linear-gradient(#fbfbfb, #ececec); border-top: 1px solid #e2e2e2; border-bottom: 1px solid #b9b9b9; }
.bar + .bar { border-top-color: #fff; border-bottom-color: #dcdcdc; }
.bar + .bar + .bar { height: 25px; border-bottom-color: #d0d0d0; }
.tool { width: 21.6px; height: 21px; flex: none; display: flex; align-items: center; justify-content: center; }
.tool.on { background: #dadada; border: 1px solid #b4b4b4; border-radius: 1px; }
.tool svg { width: 15px; height: 15px; }
.drop { width: 10px; flex: none; display: flex; justify-content: center; }
.drop::after { content: ""; border: 3px solid transparent; border-top: 3.5px solid #4d4d4d; border-bottom: 0; }
.drop.off::after { border-top-color: #999; }
.grip { flex: none; height: 12px; display: flex; justify-content: center; }
.grip::after { content: ""; width: 3px; height: 12px; background: conic-gradient(#cdcdcd 25%, transparent 0) 0 0 / 2px 2px; }
.sep { flex: none; height: 16px; display: flex; justify-content: center; }
.sep::after { content: ""; width: 1px; background: #dcdcdc; }

.body { flex: 1; min-height: 0; display: flex; padding-top: 1px; }
.left { width: 280px; display: flex; flex-direction: column; flex: none; }
.dock { display: flex; flex-direction: column; }
.browser { height: 300px; flex: none; }
.dockhead { height: 14px; flex: none; display: flex; align-items: center; padding-left: 2px; gap: 1px; }
.dockhead b { font-weight: 400; margin-right: auto; line-height: 13px; padding-bottom: 1px; }
.dockhead svg { width: 8px; height: 8px; margin-bottom: 1px; }
.left .dockhead { padding-right: 1px; }
.right .dockhead { padding-right: 1px; }
.minibar { height: 19px; flex: none; display: flex; align-items: center; padding: 0 0 2px 5px; gap: 5.6px; }
.minibar svg { width: 10.8px; height: 10.8px; }
.tight { width: 8px; margin: 0 0 0 -2.500px; }
.msep { width: 1px; height: 11px; background: #dadada; margin: 0 -.8px; }
.frame { flex: 1; min-height: 0; display: flex; border: 1px solid #c4c4c4; background: #fff; overflow: hidden; }
.browser .frame { width: 280px; border-bottom: 0; }
.rows { flex: 1; min-width: 0; overflow: hidden; }
.row { height: 14.42px; display: flex; align-items: center; white-space: nowrap; line-height: 14.4px; }
.row.hover { background: #f0f0f0; }
.row em { width: 10px; height: 8px; margin-right: 5px; flex: none; display: flex; align-items: center; justify-content: center; }
.row em.shut::after { content: ""; border: 3px solid transparent; border-left: 3.5px solid #4a4a4a; border-right: 0; }
.row em.open::after { content: ""; border: 3px solid transparent; border-top: 3.5px solid #4a4a4a; border-bottom: 0; }
.row svg { width: 13px; height: 13px; margin-right: 4px; }
.vscroll { width: 12px; flex: none; display: flex; flex-direction: column; border-left: 1px solid #d0d0d0; background: #e3e3e3; align-items: stretch; }
.vscroll i { height: 11px; display: flex; align-items: center; justify-content: center; background: #f6f6f6; }
.up::after { content: ""; border: 3px solid transparent; border-bottom: 3.5px solid #555; border-top: 0; }
.down::after { content: ""; border: 3px solid transparent; border-top: 3.5px solid #555; border-bottom: 0; }
.vscroll .gap { height: 9px; border: solid #ccc; border-width: 1px 0; }
.vscroll .thumb { height: 57px; background: #fafafa; border-bottom: 1px solid #ccc; }
.track { flex: 1; background: #e3e3e3; }
.hscroll { height: 12px; flex: none; display: flex; border: 1px solid #c4c4c4; background: #f8f8f8; }
.hscroll i { width: 11px; display: flex; align-items: center; justify-content: center; }
.lt::after { content: ""; border: 3px solid transparent; border-right: 3.5px solid #444; border-left: 0; }
.rt::after { content: ""; border: 3px solid transparent; border-left: 3.5px solid #444; border-right: 0; }
.hscroll .thumb { width: 229px; border: solid #ccc; border-width: 0 1px; background: #fdfdfd; }
.hscroll .track { flex: none; width: 16px; }
.hscroll .corner { flex: 1; background: #efefef; border-left: 1px solid #ddd; }
.split { height: 4px; flex: none; display: flex; align-items: center; justify-content: center; }
.split::after { content: ""; width: 12px; height: 1px; background: repeating-linear-gradient(90deg, #c0c0c0 0 1px, transparent 1px 2px); }
.layers { flex: 1; min-height: 0; }
.layerlist { flex: 1; background: #fff; border: 1px solid #c4c4c4; padding: 0 0 0 18px; }
.layer { height: 14px; display: flex; align-items: center; white-space: nowrap; }
.check { width: 11px; height: 11px; border: 1px solid #ccc; background: #fff; font: 700 11px/9px "DejaVu Sans", sans-serif; flex: none; text-align: center; }
.layer b { font-weight: 600; font-size: 10px; }
.dot { width: 7px; height: 7px; border-radius: 50%; background: #a8705a; border: 1px solid #684738; margin: 0 7px; }
.sq { width: 12px; height: 12px; background: #7c898c; border: 1px solid #555f61; margin: 0 4px 0 4.5px; }

.canvas { width: 660px; flex: none; margin-left: 4px; border: 1px solid #bcbcbc; border-bottom-color: #ccc; background: #fff; overflow: hidden; }

.right { width: 308px; margin-left: 5px; display: flex; flex-direction: column; flex: none; }
.toolbox { height: 256px; flex: none; }
.search { height: 15px; flex: none; display: flex; align-items: center; background: #fff; border: 1px solid #b9b9b9; border-radius: 2px; padding-left: 5px; color: #777; font-family: "Liberation Mono", "Noto Sans CJK SC", monospace; font-size: 10px; }
.search svg { width: 9px; height: 9px; margin-right: 4px; }
.toolbox .row { padding-left: 2px; }
.toolbox .vscroll .thumb { height: 112px; }
.results { flex: 1; min-height: 0; }
.grid { margin: 1px 0 2px; height: 208px; flex: none; background: #fff; border: 1px solid #c4c4c4; }
.ghead { height: 14px; display: flex; background: linear-gradient(#fdfdfd, #ededed); border-bottom: 1px solid #ccc; line-height: 13px; }
.ghead span { width: 82px; padding-left: 1px; }
.form { height: 21px; flex: none; display: flex; align-items: center; padding-left: 3px; gap: 3px; font-size: 9.8px; }
.lab { width: 20px; white-space: nowrap; }
.dim { color: #999; }
.combo { height: 16px; width: 58px; display: flex; align-items: center; justify-content: space-between; border: 1px solid #bbb; border-radius: 2px; background: linear-gradient(#fff, #efefef); padding: 0 4px 0 2px; white-space: nowrap; font-family: "Liberation Mono", "Noto Sans CJK SC", monospace; }
.combo.wide { width: 279px; height: 18px; font-size: 8.9px; }
.btn { margin: 0 3px 0 auto; width: 36px; height: 15px; border: 1px solid #b3b3b3; border-radius: 2px; background: linear-gradient(#fff, #f0f0f0); text-align: center; line-height: 13px; }

.status { height: 22px; flex: none; display: flex; align-items: center; white-space: nowrap; padding-left: 2px; font-size: 9.1px; font-family: "Liberation Mono", "Noto Sans CJK SC", monospace; }
.locator { width: 160px; height: 16px; background: #fff; border: 1px solid #b5b5b5; border-radius: 2px; display: flex; align-items: center; color: #777; padding-left: 5px; }
.locator svg { width: 9px; height: 9px; margin-right: 5px; }
.msg { width: 510px; padding-left: 5px; font-size: 9px; }
.st { font-size: 8.9px; }
.box { height: 14px; border: 1px solid #b9b9b9; border-radius: 2px; background: #fff; font-size: 8.3px; letter-spacing: -.3px; display: flex; align-items: center; justify-content: space-between; padding-left: 3px; margin-left: 2px; }
.coord { width: 73px; }
.si { width: 12px; height: 12px; margin-left: 3px; }
.scale { margin-left: 10px; }
.scalebox { width: 67px; padding-right: 2px; }
.lock { margin: 0 5px 0 8px; }
.mag { width: 69px; }
.rot { margin-left: 5px; }
.ang { width: 66px; margin-right: 4px; margin-left: 4px; }
.spin { width: 10px; height: 12px; border-left: 1px solid #ccc; display: flex; flex-direction: column; align-items: center; justify-content: center; gap: 2px; }
.spin i:first-child { border: 2.5px solid transparent; border-bottom: 3px solid #555; border-top: 0; }
.spin i:last-child { border: 2.5px solid transparent; border-top: 3px solid #555; border-bottom: 0; }
.render { margin: 0 8px 0 5px; }
.epsg { font-size: 8.3px; letter-spacing: -.3px; margin-left: 3px; }
.chat { width: 13px; height: 13px; margin-left: auto; margin-right: 4px; }
</style>
